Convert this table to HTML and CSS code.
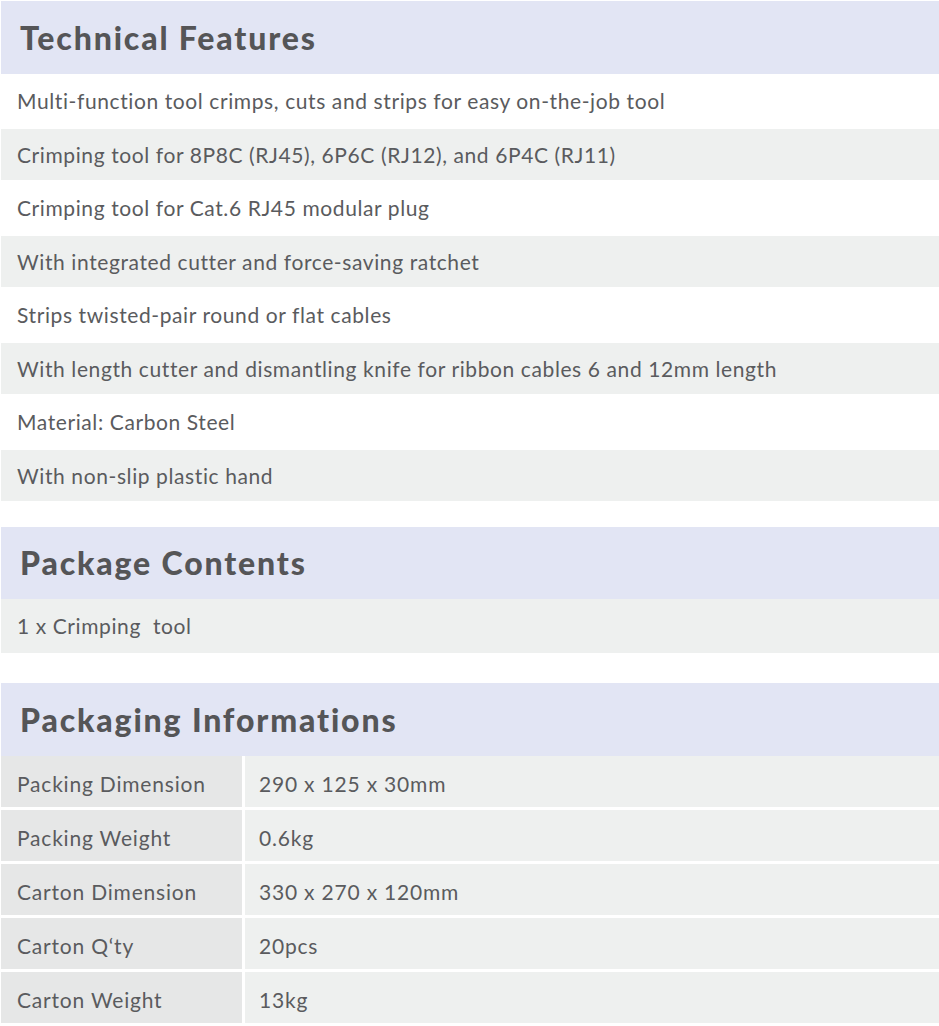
FILE: index.html
```html
<!DOCTYPE html>
<html lang="en">
<head>
<meta charset="utf-8">
<title>Crimping tool specifications</title>
<link rel="stylesheet" href="styles.css">
</head>
<body>
<main class="page">
  <section class="spec">
    <h2 class="spec-title">Technical Features</h2>
    <ul class="feature-list">
      <li>Multi-function tool crimps, cuts and strips for easy on-the-job tool</li>
      <li>Crimping tool for 8P8C (RJ45), 6P6C (RJ12), and 6P4C (RJ11)</li>
      <li>Crimping tool for Cat.6 RJ45 modular plug</li>
      <li>With integrated cutter and force-saving ratchet</li>
      <li>Strips twisted-pair round or flat cables</li>
      <li>With length cutter and dismantling knife for ribbon cables 6 and 12mm length</li>
      <li>Material: Carbon Steel</li>
      <li>With non-slip plastic hand</li>
    </ul>
  </section>

  <section class="spec spec-contents">
    <h2 class="spec-title">Package Contents</h2>
    <div class="contents-row">1 x Crimping&nbsp; tool</div>
  </section>

  <section class="spec spec-packaging">
    <h2 class="spec-title">Packaging Informations</h2>
    <div class="pack-table">
      <div class="pack-label">Packing Dimension</div><div class="pack-value">290 x 125 x 30mm</div>
      <div class="pack-label">Packing Weight</div><div class="pack-value">0.6kg</div>
      <div class="pack-label">Carton Dimension</div><div class="pack-value">330 x 270 x 120mm</div>
      <div class="pack-label">Carton Q‘ty</div><div class="pack-value">20pcs</div>
      <div class="pack-label">Carton Weight</div><div class="pack-value">13kg</div>
    </div>
  </section>
</main>
</body>
</html>
```

FILE: styles.css
```css
* {
  box-sizing: border-box;
}

body {
  margin: 0;
  background: #ffffff;
  font-family: Lato, "Open Sans", "Liberation Sans", sans-serif;
  font-weight: 400;
  color: #5a5b5e;
}

.page {
  width: 938px;
  margin: 1px 0 0 1px;
}

.spec-title {
  margin: 0;
  height: 72.5px;
  display: flex;
  align-items: center;
  padding-left: 19px;
  background: #e2e5f4;
  font-size: 32px;
  font-weight: 900;
  color: #555557;
  letter-spacing: 1.85px;
}

.feature-list {
  list-style: none;
  margin: 2px 0 0;
  padding: 0;
  display: flex;
  flex-direction: column;
  gap: 3px;
}

.feature-list li {
  height: 50.5px;
  display: flex;
  align-items: center;
  padding-left: 16px;
  font-size: 21px;
  letter-spacing: 0.6px;
}

.feature-list li:nth-child(even) {
  background: #eef0ef;
}

.spec-contents {
  margin-top: 26px;
}

.contents-row {
  height: 53.5px;
  display: flex;
  align-items: center;
  padding-left: 16px;
  background: #eef0ef;
  font-size: 21px;
  letter-spacing: 0.6px;
}

.spec-packaging {
  margin-top: 30.5px;
}

.pack-table {
  display: grid;
  grid-template-columns: 241px 1fr;
  column-gap: 3px;
  row-gap: 3px;
}

.pack-label,
.pack-value {
  height: 51px;
  display: flex;
  align-items: center;
  padding-top: 5px;
  font-size: 21px;
  letter-spacing: 0.8px;
}

.pack-label {
  padding-left: 16px;
  background: #e6e7e7;
}

.pack-value {
  padding-left: 14px;
  background: #eef0ef;
}
```
